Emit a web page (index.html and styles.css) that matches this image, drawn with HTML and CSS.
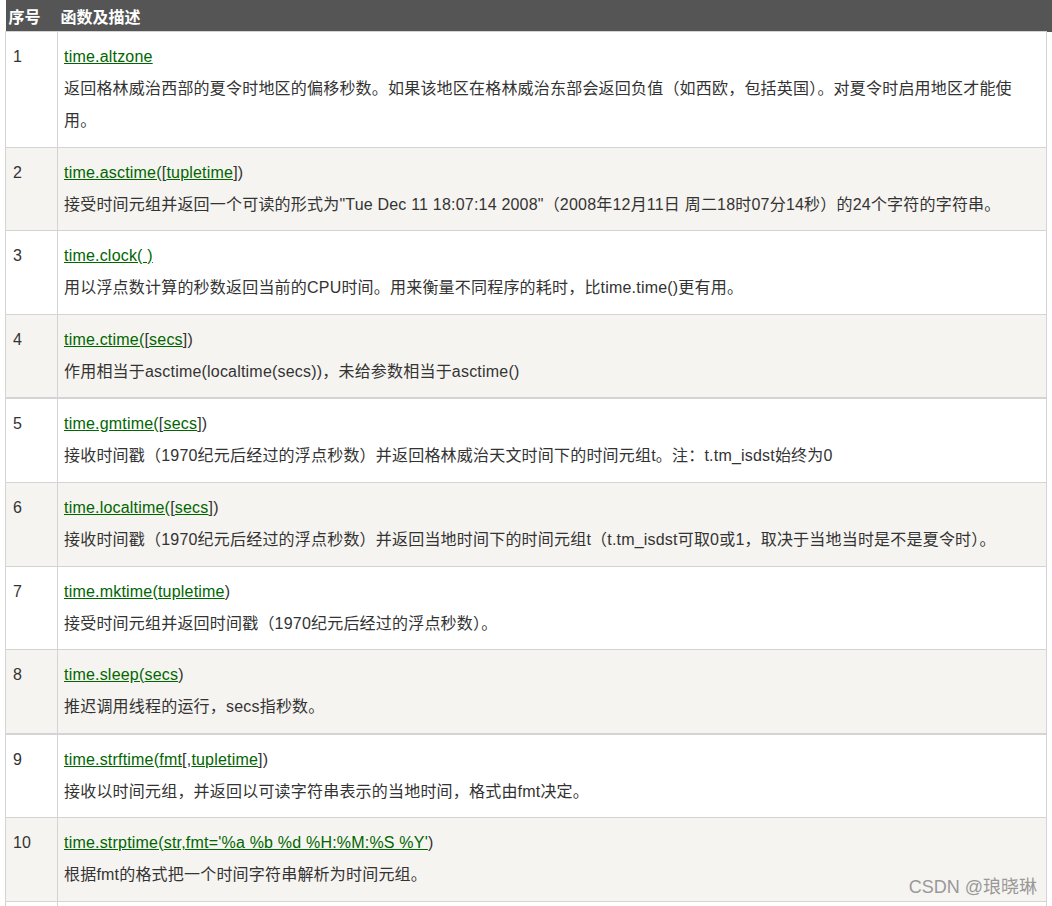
FILE: index.html
```html
<!DOCTYPE html>
<html lang="zh-CN">
<head>
<meta charset="utf-8">
<title>time 模块函数</title>
<link rel="stylesheet" href="styles.css">
</head>
<body>
<div class="page">
<table class="ref">
  <thead>
    <tr><th class="col-no">序号</th><th class="col-fn">函数及描述</th></tr>
  </thead>
  <tbody>
    <tr>
      <td class="no">1</td>
      <td class="fn"><a href="#">time.altzone</a><br>返回格林威治西部的夏令时地区的偏移秒数。如果该地区在格林威治东部会返回负值（如西欧，包括英国）。对夏令时启用地区才能使用。</td>
    </tr>
    <tr>
      <td class="no">2</td>
      <td class="fn"><a href="#">time.asctime(</a>[<a href="#">tupletime</a>])<br>接受时间元组并返回一个可读的形式为"Tue Dec 11 18:07:14 2008"（2008年12月11日 周二18时07分14秒）的24个字符的字符串。</td>
    </tr>
    <tr>
      <td class="no">3</td>
      <td class="fn"><a href="#">time.clock( )</a><br>用以浮点数计算的秒数返回当前的CPU时间。用来衡量不同程序的耗时，比time.time()更有用。</td>
    </tr>
    <tr>
      <td class="no">4</td>
      <td class="fn"><a href="#">time.ctime(</a>[<a href="#">secs</a>])<br>作用相当于asctime(localtime(secs))，未给参数相当于asctime()</td>
    </tr>
    <tr class="split">
      <td class="no">5</td>
      <td class="fn"><a href="#">time.gmtime(</a>[<a href="#">secs</a>])<br>接收时间戳（1970纪元后经过的浮点秒数）并返回格林威治天文时间下的时间元组t。注：t.tm_isdst始终为0</td>
    </tr>
    <tr>
      <td class="no">6</td>
      <td class="fn"><a href="#">time.localtime(</a>[<a href="#">secs</a>])<br>接收时间戳（1970纪元后经过的浮点秒数）并返回当地时间下的时间元组t（t.tm_isdst可取0或1，取决于当地当时是不是夏令时）。</td>
    </tr>
    <tr>
      <td class="no">7</td>
      <td class="fn"><a href="#">time.mktime(</a><a href="#">tupletime</a>)<br>接受时间元组并返回时间戳（1970纪元后经过的浮点秒数）。</td>
    </tr>
    <tr>
      <td class="no">8</td>
      <td class="fn"><a href="#">time.sleep(</a><a href="#">secs</a>)<br>推迟调用线程的运行，secs指秒数。</td>
    </tr>
    <tr class="split">
      <td class="no">9</td>
      <td class="fn"><a href="#">time.strftime(</a><a href="#">fmt</a>[,<a href="#">tupletime</a>])<br>接收以时间元组，并返回以可读字符串表示的当地时间，格式由fmt决定。</td>
    </tr>
    <tr>
      <td class="no">10</td>
      <td class="fn"><a href="#">time.strptime(</a><a href="#">str,fmt='%a %b %d %H:%M:%S %Y'</a>)<br>根据fmt的格式把一个时间字符串解析为时间元组。</td>
    </tr>
    <tr class="blank">
      <td class="no"></td>
      <td class="fn"></td>
    </tr>
  </tbody>
</table>
<div class="watermark">CSDN @琅晓琳</div>
</div>
</body>
</html>
```

FILE: styles.css
```css
html, body {
  margin: 0;
  padding: 0;
  background: #fff;
}

body {
  font-family: "Liberation Sans", Arial, "Noto Sans CJK SC", sans-serif;
  font-size: 16px;
  color: #333;
  overflow: hidden;
}

.page {
  position: relative;
  padding-left: 5px;
  height: 906px;
  overflow: hidden;
}

.ref {
  width: 1042px;
  border-collapse: collapse;
  table-layout: fixed;
}

.ref th {
  background: #555;
  color: #fff;
  font-weight: bold;
  text-align: left;
  height: 31px;
  padding: 0 3px;
  font-size: 16px;
  line-height: 20px;
  font-family: "Noto Sans CJK SC", sans-serif;
}

.ref th.col-no {
  width: 46px;
}

.ref th.col-fn {
  box-shadow: 5px 0 0 #555;
}

.ref td {
  border: 1px solid #d4d4d4;
  padding: 9px 20px 9.6px 6px;
  line-height: 32px;
  letter-spacing: 0.2px;
  vertical-align: top;
}

.ref td.no {
  padding-left: 7px;
  padding-right: 4px;
}

.ref tr.blank td {
  height: 40px;
}

.ref tbody tr:nth-child(even) td {
  background: #f6f4f0;
}

.ref tr.split td {
  border-top: 2px solid #d4d4d4;
}

.ref a {
  color: #006600;
  text-decoration: underline;
}

.watermark {
  position: absolute;
  right: 15px;
  top: 874px;
  font-size: 18px;
  line-height: 26px;
  color: #999;
}
```
